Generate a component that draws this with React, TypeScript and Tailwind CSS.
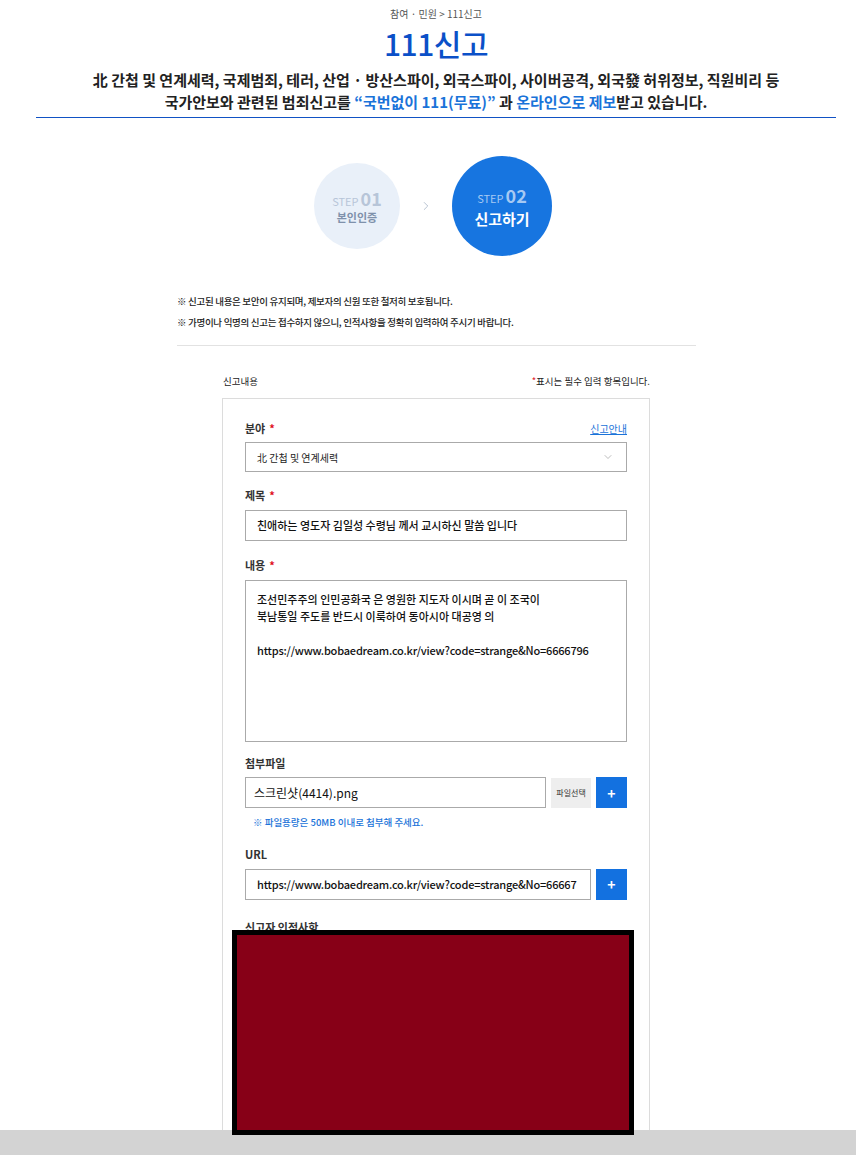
import { ChevronDown, ChevronRight } from "lucide-react";

const font = { fontFamily: '"Noto Sans CJK KR", "Noto Sans", sans-serif' };

function Label({ text, required }: { text: string; required?: boolean }) {
  return (
    <div className="text-[11px] font-bold leading-none text-[#333]">
      {text}
      {required && <span className="ml-1 text-[#e0101d]">*</span>}
    </div>
  );
}

function PlusButton() {
  return (
    <button
      type="button"
      className="flex h-[31px] w-[31px] shrink-0 items-center justify-center bg-[#1371e0] text-[14px] font-bold leading-none text-white"
    >
      +
    </button>
  );
}

export default function App() {
  return (
    <div className="fixed inset-0 overflow-hidden bg-white pl-[16px] text-[#222]" style={font}>
      {/* Page header */}
      <div className="pt-[6px] text-center">
        <div className="text-[10px] leading-[16px] text-[#555]">참여 · 민원 &gt; 111신고</div>
        <h1 className="mt-px text-[30px] font-medium leading-[40px] tracking-[-0.5px] text-[#0b50c8]">
          111신고
        </h1>
        <p className="mt-[6px] text-[15px] font-bold leading-[22px] text-[#222]">
          北 간첩 및 연계세력, 국제범죄, 테러, 산업 · 방산스파이, 외국스파이, 사이버공격, 외국發 허위정보, 직원비리 등
          <br />
          국가안보와 관련된 범죄신고를 <span className="text-[#1a73d9]">“국번없이 111(무료)”</span> 과{" "}
          <span className="text-[#1a73d9]">온라인으로 제보</span>받고 있습니다.
        </p>
      </div>
      <div className="mx-[20px] mt-[4px] h-px bg-[#1152c4]" />

      {/* Steps */}
      <div className="mt-[38px] flex items-center justify-center pr-[6px]">
        <div className="flex h-[86px] w-[86px] flex-col items-center justify-center rounded-full bg-[#e9f0f9]">
          <div className="flex items-baseline gap-[2px] leading-none">
            <span className="text-[11px] text-[#b7c5d8]">STEP</span>
            <span className="text-[18px] font-bold text-[#b7c5d8]">01</span>
          </div>
          <div className="mt-[5px] text-[11px] font-bold leading-none text-[#7f91ab]">본인인증</div>
        </div>
        <ChevronRight className="mx-[19px] h-[14px] w-[14px] text-[#9aa9bd]" strokeWidth={1.2} />
        <div className="flex h-[100px] w-[100px] flex-col items-center justify-center rounded-full bg-[#1775e0]">
          <div className="flex items-baseline gap-[2px] leading-none">
            <span className="text-[11px] text-[#a6c9f3]">STEP</span>
            <span className="text-[18px] font-bold text-[#a6c9f3]">02</span>
          </div>
          <div className="mt-[7px] text-[15px] font-bold leading-none text-white">신고하기</div>
        </div>
      </div>

      {/* Notes */}
      <div className="mx-auto mt-[38px] w-[520px] pl-px">
        <p className="text-[9.5px] font-medium leading-[14px] tracking-[-0.3px] text-[#222]">
          ※ 신고된 내용은 보안이 유지되며, 제보자의 신원 또한 철저히 보호됩니다.
        </p>
        <p className="mt-[7px] text-[9.5px] font-medium leading-[14px] tracking-[-0.3px] text-[#222]">
          ※ 가명이나 익명의 신고는 접수하지 않으니, 인적사항을 정확히 입력하여 주시기 바랍니다.
        </p>
        <div className="mt-[16px] h-px bg-[#e2e2e2]" />
      </div>

      {/* Form */}
      <div className="mx-auto mt-[28px] w-[428px]">
        <div className="flex items-center justify-between pl-px text-[9.5px] leading-[14px] text-[#222]">
          <span>신고내용</span>
          <span>
            <span className="text-[#e0101d]">*</span>표시는 필수 입력 항목입니다.
          </span>
        </div>
        <div className="mt-[10px] border border-b-0 border-[#dcdcdc] px-[22px] pb-[60px] pt-[24px]">
          <div className="flex items-end justify-between">
            <Label text="분야" required />
            <a href="#" className="text-[10px] leading-none text-[#1a73d9] underline">
              신고안내
            </a>
          </div>
          <div className="mt-[8px] flex h-[30px] items-center justify-between border border-[#aaa] pl-[11px] pr-[12px]">
            <span className="text-[10px] text-[#222]">北 간첩 및 연계세력</span>
            <ChevronDown className="h-[12px] w-[12px] text-[#999]" strokeWidth={1.3} />
          </div>

          <div className="mt-[18px]">
            <Label text="제목" required />
          </div>
          <div className="mt-[9px] flex h-[31px] items-center border border-[#aaa] pl-[11px] text-[11px] font-medium text-[#111]">
            친애하는 영도자 김일성 수령님 께서 교시하신 말씀 입니다
          </div>

          <div className="mt-[19px]">
            <Label text="내용" required />
          </div>
          <div className="mt-[9px] h-[162px] border border-[#aaa] px-[11px] pt-[10px] text-[11px] font-medium leading-[17px] text-[#111]">
            <div>조선민주주의 인민공화국 은 영원한 지도자 이시며 곧 이 조국이</div>
            <div>북남통일 주도를 반드시 이룩하여 동아시아 대공영 의</div>
            <div className="h-[17px]" />
            <div className="tracking-[-0.2px]">https://www.bobaedream.co.kr/view?code=strange&amp;No=6666796</div>
          </div>

          <div className="mt-[16px]">
            <Label text="첨부파일" />
          </div>
          <div className="mt-[8px] flex items-center">
            <div className="flex h-[31px] w-[302px] items-center border border-[#aaa] pl-[8px] text-[12px] text-[#111]">
              스크린샷(4414).png
            </div>
            <div className="ml-[5px] flex h-[30px] w-[40px] items-center justify-center bg-[#eeeeee] text-[8px] text-[#333]">
              파일선택
            </div>
            <div className="ml-[5px]">
              <PlusButton />
            </div>
          </div>
          <p className="mt-[10px] pl-[8px] text-[9.5px] font-medium leading-none text-[#1a73d9]">
            ※ 파일용량은 50MB 이내로 첨부해 주세요.
          </p>

          <div className="mt-[21px]">
            <Label text="URL" />
          </div>
          <div className="mt-[9px] flex items-center">
            <div className="flex h-[31px] w-[346px] items-center border border-[#aaa] pl-[11px] text-[11px] font-medium tracking-[-0.2px] text-[#111]">
              https://www.bobaedream.co.kr/view?code=strange&amp;No=66667
            </div>
            <div className="ml-[5px]">
              <PlusButton />
            </div>
          </div>

          <div className="mt-[22px]">
            <Label text="신고자 인적사항" />
          </div>
          <div className="h-[300px]" />
        </div>
      </div>

      {/* Redaction block */}
      <div className="absolute left-[232px] top-[930px] z-20 h-[205px] w-[402px] border-[5px] border-black bg-[#870017]" />

      {/* Bottom bar */}
      <div className="absolute bottom-0 left-0 right-0 z-10 h-[25px] bg-[#d3d3d3]" />
    </div>
  );
}
